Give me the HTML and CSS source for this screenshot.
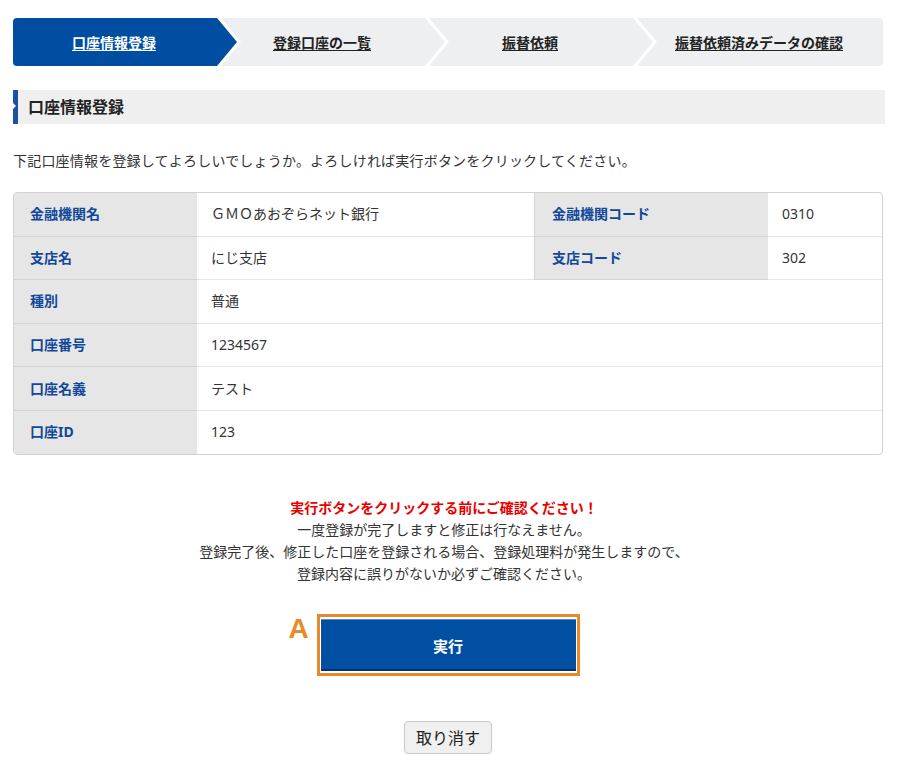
FILE: index.html
```html
<!DOCTYPE html>
<html lang="ja">
<head>
<meta charset="utf-8">
<title>口座情報登録</title>
<link rel="stylesheet" href="styles.css">
</head>
<body>
<div class="page">
  <nav class="steps">
    <a class="step active" href="#"><span>口座情報登録</span></a>
    <a class="step" href="#"><span>登録口座の一覧</span></a>
    <a class="step" href="#"><span>振替依頼</span></a>
    <a class="step" href="#"><span>振替依頼済みデータの確認</span></a>
  </nav>

  <h2 class="heading">口座情報登録</h2>

  <p class="lead">下記口座情報を登録してよろしいでしょうか。よろしければ実行ボタンをクリックしてください。</p>

  <div class="table-wrap">
    <table class="info">
      <tr>
        <th class="c1">金融機関名</th>
        <td class="c2">ＧＭＯあおぞらネット銀行</td>
        <th class="c3">金融機関コード</th>
        <td class="c4">0310</td>
      </tr>
      <tr>
        <th>支店名</th>
        <td>にじ支店</td>
        <th class="c3">支店コード</th>
        <td>302</td>
      </tr>
      <tr>
        <th>種別</th>
        <td colspan="3">普通</td>
      </tr>
      <tr>
        <th>口座番号</th>
        <td colspan="3">1234567</td>
      </tr>
      <tr>
        <th>口座名義</th>
        <td colspan="3">テスト</td>
      </tr>
      <tr class="last">
        <th>口座ID</th>
        <td colspan="3">123</td>
      </tr>
    </table>
  </div>

  <div class="notice">
    <p class="warn">実行ボタンをクリックする前にご確認ください！</p>
    <p>一度登録が完了しますと修正は行なえません。</p>
    <p>登録完了後、修正した口座を登録される場合、登録処理料が発生しますので、</p>
    <p>登録内容に誤りがないか必ずご確認ください。</p>
  </div>

  <div class="actions">
    <div class="submit-frame">
      <span class="mark">A</span>
      <button class="submit" type="button">実行</button>
    </div>
  </div>

  <div class="cancel-row">
    <button class="cancel" type="button">取り消す</button>
  </div>
</div>
</body>
</html>
```

FILE: styles.css
```css
html, body {
  margin: 0;
  padding: 0;
  background: #fff;
}

body {
  font-family: "Noto Sans", "Noto Sans CJK JP", sans-serif;
  color: #333;
}

.page {
  width: 870px;
  padding: 18px 27px 0 13px;
}

/* step bar */
.steps {
  display: flex;
  height: 48px;
  border-radius: 4px;
  overflow: hidden;
}

.step {
  flex: 0 0 224px;
  box-sizing: border-box;
  display: flex;
  align-items: center;
  justify-content: center;
  padding-right: 22px;
  margin-left: -16px;
  background: #eeeff1;
  color: #222;
  font-size: 14px;
  font-weight: bold;
  text-decoration: underline;
  text-underline-offset: 2px;
  clip-path: polygon(0 0, calc(100% - 20px) 0, 100% 50%, calc(100% - 20px) 100%, 0 100%, 20px 50%);
}

.step:first-child {
  margin-left: 0;
  clip-path: polygon(0 0, calc(100% - 20px) 0, 100% 50%, calc(100% - 20px) 100%, 0 100%);
}

.step:last-child {
  flex: 1 1 auto;
  padding-right: 2px;
  padding-left: 0;
  clip-path: polygon(0 0, 100% 0, 100% 100%, 0 100%, 20px 50%);
}

.step.active {
  background: #004ea2;
  color: #fff;
}

/* heading */
.heading {
  position: relative;
  margin: 24px -2px 0 0;
  height: 34px;
  line-height: 34px;
  background: #efefef;
  border-left: 5px solid #1d50a2;
  padding-left: 10px;
  font-size: 16px;
  font-weight: bold;
  color: #222;
}

.heading::before {
  content: "";
  position: absolute;
  left: -5px;
  top: 13px;
  border-top: 3px solid transparent;
  border-bottom: 3px solid transparent;
  border-left: 3px solid #fff;
}

.lead {
  margin: 27px 0 0;
  font-size: 14px;
  line-height: 20px;
  letter-spacing: 0.2px;
  color: #333;
}

/* table */
.table-wrap {
  margin-top: 21px;
  border: 1px solid #d2d2d2;
  border-radius: 4px;
  overflow: hidden;
}

.info {
  width: 100%;
  border-collapse: separate;
  border-spacing: 0;
  font-size: 14px;
}

.info th,
.info td {
  height: 42.6px;
  padding: 0;
  text-align: left;
  vertical-align: middle;
  line-height: 20px;
}

.info th {
  background: #e6e6e6;
  color: #12489a;
  font-weight: bold;
  padding-left: 16px;
  border-bottom: 1px solid #d3d3d3;
}

.info td {
  color: #333;
  padding-left: 14px;
  border-bottom: 1px solid #e6e6e6;
}

.info tr.last th,
.info tr.last td {
  border-bottom: none;
}

.info .c1 { width: 167px; }
.info .c2 { width: 323px; }
.info .c3 {
  width: 216px;
  padding-left: 17px;
  border-left: 1px solid #d3d3d3;
}

/* notice */
.notice {
  margin-top: 42px;
  padding-right: 8px;
  text-align: center;
  font-size: 14px;
  line-height: 22px;
  color: #333;
}

.notice p {
  margin: 0;
}

.notice .warn {
  color: #e80000;
  font-weight: bold;
}

/* actions */
.actions {
  margin-top: 29px;
  display: flex;
  justify-content: center;
}

.submit-frame {
  position: relative;
  border: 3px solid #e98a2a;
  padding: 2px 1px;
  display: flex;
}

.mark {
  position: absolute;
  left: -31px;
  top: -2px;
  font-family: "Liberation Sans", "Noto Sans", sans-serif;
  font-size: 28px;
  font-weight: bold;
  line-height: 28px;
  color: #e98a2a;
}

.submit {
  width: 255px;
  height: 52px;
  border: none;
  border-top: 1px solid #5a86c4;
  background: #004fa3;
  box-shadow: inset 0 -2px 0 #003377;
  color: #fff;
  font-family: "Noto Sans", "Noto Sans CJK JP", sans-serif;
  font-size: 15px;
  font-weight: bold;
  padding: 0;
}

.cancel-row {
  margin-top: 45px;
  display: flex;
  justify-content: center;
}

.cancel {
  height: 33px;
  padding: 0 11px;
  background: #f0f0f0;
  border: 1px solid #c9c9c9;
  border-radius: 4px;
  color: #222;
  font-family: "Noto Sans", "Noto Sans CJK JP", sans-serif;
  font-size: 16px;
}
```
